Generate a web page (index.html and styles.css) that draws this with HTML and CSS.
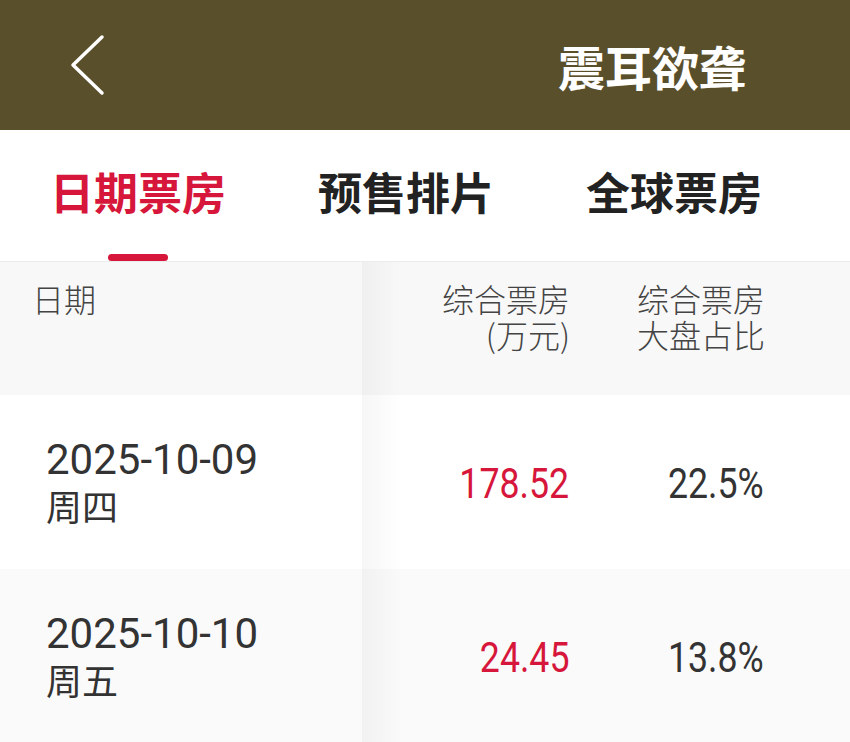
FILE: index.html
```html
<!DOCTYPE html>
<html>

<head>
    <meta http-equiv="Content-Type" content="text/html;charset=utf-8">
    <title>震耳欲聋 - 日期票房</title>
    <link rel="stylesheet" href="styles.css">
</head>

<body>
    <div class="topbar">
        <svg class="back" width="40" height="64" viewBox="0 0 40 64">
            <polyline points="34,4 5,32 34,60" fill="none" stroke="#ffffff" stroke-width="3.5" stroke-linecap="round" stroke-linejoin="round" />
        </svg>
        <div class="title">震耳欲聋</div>
    </div>

    <div class="tabs">
        <div class="tab active">
            <span class="tab-text">日期票房</span>
            <span class="tab-bar"></span>
        </div>
        <div class="tab">
            <span class="tab-text">预售排片</span>
            <span class="tab-bar"></span>
        </div>
        <div class="tab">
            <span class="tab-text">全球票房</span>
            <span class="tab-bar"></span>
        </div>
    </div>

    <div class="table">
        <div class="row head">
            <div class="col-date">日期</div>
            <div class="cols">
                <div class="col"><span class="line">综合票房</span><span class="line">(万元)</span></div>
                <div class="col"><span class="line">综合票房</span><span class="line">大盘占比</span></div>
            </div>
        </div>

        <div class="row">
            <div class="col-date">
                <span class="date">2025-10-09</span>
                <span class="week">周四</span>
            </div>
            <div class="cols">
                <div class="col"><span class="num red">178.52</span></div>
                <div class="col"><span class="num">22.5%</span></div>
            </div>
        </div>

        <div class="row odd">
            <div class="col-date">
                <span class="date">2025-10-10</span>
                <span class="week">周五</span>
            </div>
            <div class="cols">
                <div class="col"><span class="num red">24.45</span></div>
                <div class="col"><span class="num">13.8%</span></div>
            </div>
        </div>
    </div>
</body>

</html>
```

FILE: styles.css
```css
body {
    margin: 0;
    width: 850px;
    height: 742px;
    overflow: hidden;
    font-family: Roboto, "Noto Sans CJK SC", sans-serif;
    color: #333333;
    background: #ffffff;
}

/* 상단 바 */
.topbar {
    display: flex;
    align-items: center;
    height: 130px;
    padding-left: 68px;
    background-color: #5a4f2b;
}

.title {
    margin-left: auto;
    padding-right: 104px;
    font-family: "Noto Sans CJK SC", sans-serif;
    font-size: 47px;
    font-weight: 700;
    color: #ffffff;
    line-height: 1;
}

/* 탭 */
.tabs {
    display: flex;
    gap: 92px;
    height: 132px;
    padding-left: 50px;
    border-bottom: 1px solid #ececec;
    box-sizing: border-box;
}

.tab {
    display: flex;
    flex-direction: column;
    align-items: center;
    padding-top: 37px;
}

.tab-text {
    font-family: "Noto Sans CJK SC", sans-serif;
    font-size: 44px;
    font-weight: 700;
    line-height: 48px;
    color: #222222;
}

.tab-bar {
    width: 60px;
    height: 8px;
    margin-top: 39px;
    border-radius: 4px;
}

.tab.active .tab-text {
    color: #d6163a;
}

.tab.active .tab-bar {
    background-color: #d6163a;
}

/* 표 */
.row {
    display: flex;
    height: 174px;
    background-color: #ffffff;
}

.row.head {
    height: 133px;
    background-color: #f8f8f8;
}

.row.odd {
    background-color: #fafafa;
}

.col-date {
    display: flex;
    flex-direction: column;
    justify-content: center;
    width: 362px;
    flex-shrink: 0;
    padding-left: 46px;
    box-sizing: border-box;
}

.cols {
    display: flex;
    align-items: center;
    flex: 1;
    gap: 35px;
    padding-right: 85px;
    justify-content: flex-end;
    background-image: linear-gradient(to right, rgba(0, 0, 0, 0.035), rgba(0, 0, 0, 0) 40px);
}

.col {
    width: 160px;
    text-align: right;
}

.head .col-date,
.head .col {
    font-family: "Noto Sans CJK SC", sans-serif;
    font-size: 32px;
    font-weight: 300;
    line-height: 36px;
    color: #444444;
}

.head .col-date {
    justify-content: flex-start;
    padding-left: 32px;
    padding-top: 18px;
}

.head .cols {
    align-items: flex-start;
    padding-top: 18px;
}

.head .line {
    display: block;
    height: 36px;
}

.date {
    font-size: 42px;
    line-height: 46px;
}

.week {
    font-family: "Noto Sans CJK SC", sans-serif;
    font-size: 36px;
    line-height: 44px;
}

/* 숫자는 좁은 폭으로 */
.num {
    display: inline-block;
    font-size: 42px;
    line-height: 50px;
    padding-top: 4px;
    margin-right: 1px;
    transform: scaleX(0.85);
    transform-origin: right center;
}

.num.red {
    color: #d6163a;
}
```
